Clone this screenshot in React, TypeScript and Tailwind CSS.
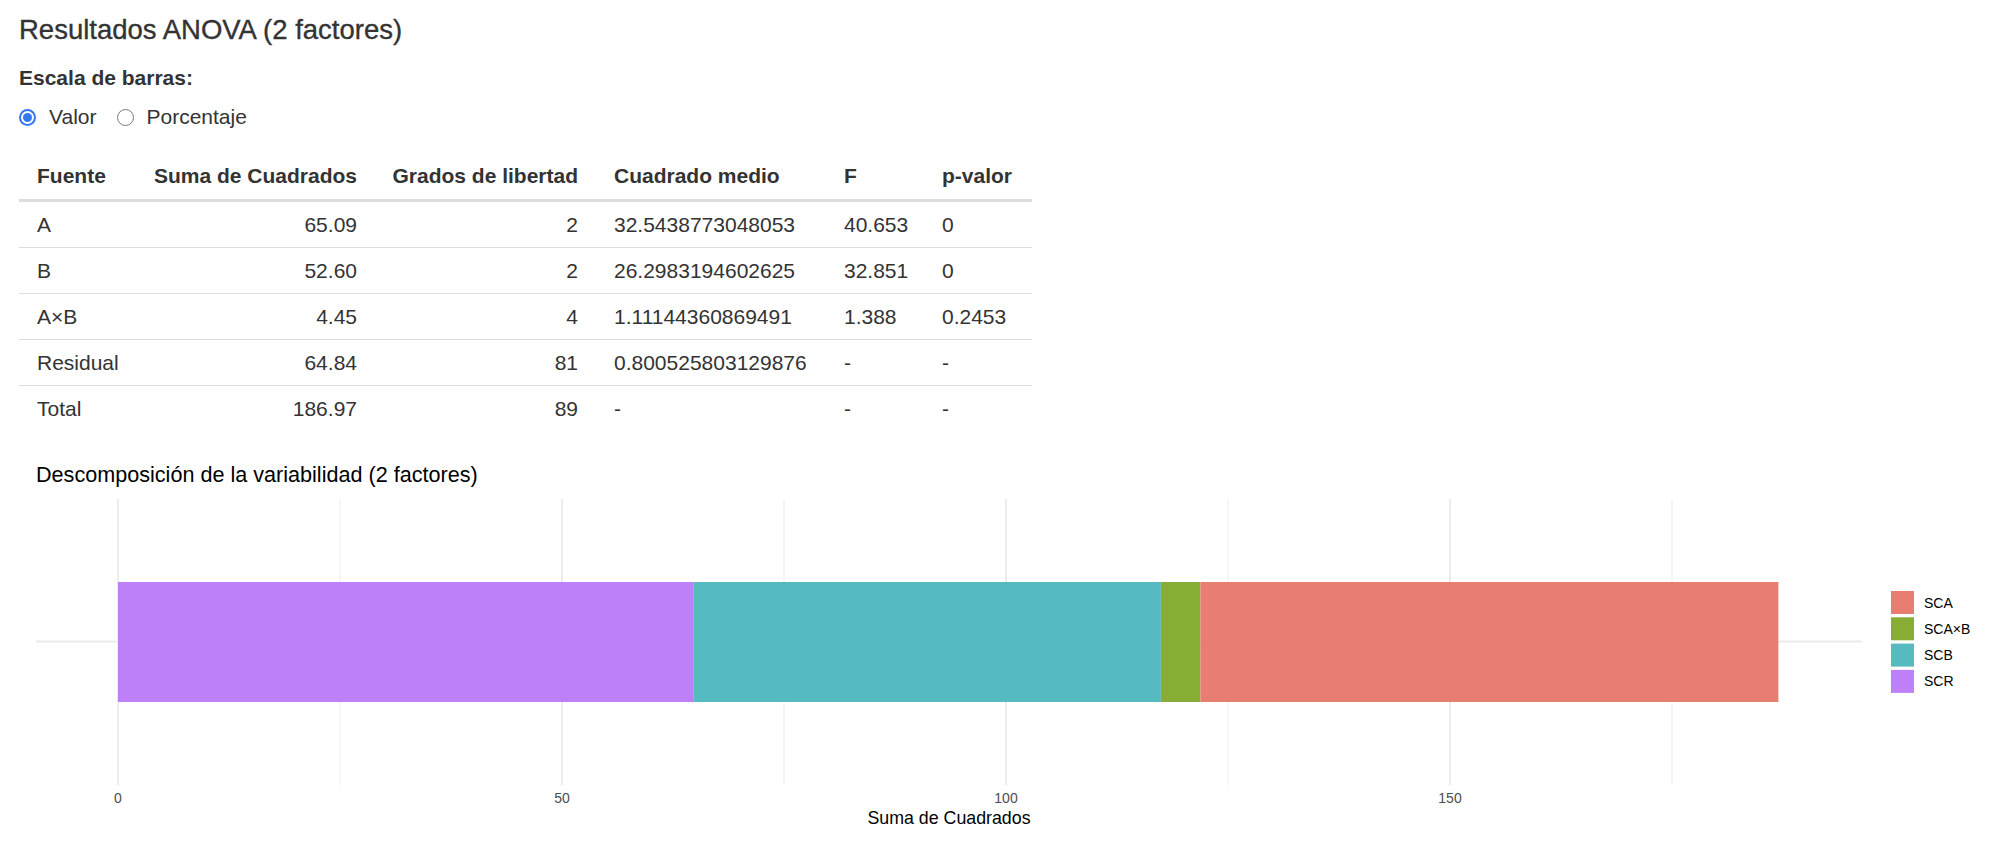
import React from "react";

const cols = [
  { key: "fuente", label: "Fuente", w: "w-[117px]", align: "text-left" },
  { key: "ss", label: "Suma de Cuadrados", w: "w-[239px]", align: "text-right" },
  { key: "df", label: "Grados de libertad", w: "w-[221px]", align: "text-right" },
  { key: "ms", label: "Cuadrado medio", w: "w-[230px]", align: "text-left" },
  { key: "f", label: "F", w: "w-[98px]", align: "text-left" },
  { key: "p", label: "p-valor", w: "w-[108px]", align: "text-left" },
];

const rows: string[][] = [
  ["A", "65.09", "2", "32.5438773048053", "40.653", "0"],
  ["B", "52.60", "2", "26.2983194602625", "32.851", "0"],
  ["A×B", "4.45", "4", "1.11144360869491", "1.388", "0.2453"],
  ["Residual", "64.84", "81", "0.800525803129876", "-", "-"],
  ["Total", "186.97", "89", "-", "-", "-"],
];

const X0 = 118;
const PX = 8.88;
const xs = (v: number) => X0 + v * PX;

const segments = [
  { name: "SCR", v: 64.84, color: "#BD80F8" },
  { name: "SCB", v: 52.6, color: "#56BBC1" },
  { name: "SCA×B", v: 4.45, color: "#87AD35" },
  { name: "SCA", v: 65.09, color: "#E87E71" },
];

const legend = [
  { name: "SCA", color: "#E87E71" },
  { name: "SCA×B", color: "#87AD35" },
  { name: "SCB", color: "#56BBC1" },
  { name: "SCR", color: "#BD80F8" },
];

function Chart() {
  let acc = 0;
  const segs = segments.map((s) => {
    const x1 = xs(acc);
    acc += s.v;
    const x2 = xs(acc);
    return { ...s, x1, x2 };
  });
  const major = [0, 50, 100, 150];
  const minor = [25, 75, 125, 175];
  return (
    <svg
      className="block mt-[9px]"
      width={1972}
      height={406}
      viewBox="19 440 1972 406"
      fontFamily="'Liberation Sans', Arial, sans-serif"
    >
      <text x={36} y={482} fontSize={21.6} fill="#000">
        Descomposición de la variabilidad (2 factores)
      </text>
      {minor.map((v) => (
        <line key={"mi" + v} x1={xs(v)} x2={xs(v)} y1={499} y2={785} stroke="#ebebeb" strokeWidth={0.9} />
      ))}
      {major.map((v) => (
        <line key={"ma" + v} x1={xs(v)} x2={xs(v)} y1={499} y2={785} stroke="#ebebeb" strokeWidth={1.8} />
      ))}
      <line x1={36} x2={1862} y1={641.5} y2={641.5} stroke="#ebebeb" strokeWidth={1.8} />
      {segs.map((s) => (
        <rect key={s.name} x={s.x1} y={582} width={s.x2 - s.x1} height={120} fill={s.color} />
      ))}
      {major.map((v) => (
        <text
          key={"t" + v}
          x={xs(v)}
          y={798}
          fontSize={14}
          fill="#4d4d4d"
          textAnchor="middle"
          dominantBaseline="central"
        >
          {v}
        </text>
      ))}
      <text x={949} y={824} fontSize={17.8} fill="#000" textAnchor="middle">
        Suma de Cuadrados
      </text>
      {legend.map((l, i) => (
        <g key={l.name}>
          <rect x={1891} y={591 + i * 26.3} width={23} height={23} fill={l.color} />
          <text
            x={1924}
            y={591 + i * 26.3 + 11.5}
            fontSize={14}
            fill="#000"
            dominantBaseline="central"
          >
            {l.name}
          </text>
        </g>
      ))}
    </svg>
  );
}

export default function App() {
  return (
    <div className="bg-white w-[2010px] h-[846px] overflow-hidden font-['Liberation_Sans',Arial,sans-serif] text-[#333]">
      <div className="px-[19px]">
        <h3 className="text-[27.5px] leading-[30px] pt-[15px] font-normal [-webkit-text-stroke:0.35px_#333]">
          Resultados ANOVA (2 factores)
        </h3>
        <div className="mt-[18px] text-[21px] leading-[30px] font-bold">Escala de barras:</div>
        <div className="mt-[9px] flex items-center h-[30px] text-[21px] leading-[30px]">
          <div className="flex items-center">
            <span className="w-[17px] h-[17px] rounded-full bg-[#3478f6] flex items-center justify-center">
              <span className="w-[13px] h-[13px] rounded-full bg-white flex items-center justify-center">
                <span className="w-[9px] h-[9px] rounded-full bg-[#3478f6]" />
              </span>
            </span>
            <span className="ml-[13px]">Valor</span>
          </div>
          <div className="flex items-center ml-[21px]">
            <span className="w-[17px] h-[17px] rounded-full border-[1.5px] border-[#7a7a7a] bg-white" />
            <span className="ml-[12px]">Porcentaje</span>
          </div>
        </div>
        <div className="mt-[21px] w-[1013px] text-[21px] whitespace-nowrap">
          <div className="flex h-[49px] border-b-[3px] border-[#dddddd] font-bold">
            {cols.map((c) => (
              <div
                key={c.key}
                className={`${c.w} shrink-0 px-[18px] flex items-center ${c.align === "text-right" ? "justify-end" : "justify-start"}`}
              >
                {c.label}
              </div>
            ))}
          </div>
          {rows.map((r, ri) => (
            <div
              key={ri}
              className={`flex ${ri < rows.length - 1 ? "h-[46px] border-b border-[#dddddd]" : "h-[45px]"}`}
            >
              {r.map((cell, ci) => (
                <div
                  key={ci}
                  className={`${cols[ci].w} shrink-0 px-[18px] flex items-center ${cols[ci].align === "text-right" ? "justify-end" : "justify-start"}`}
                >
                  {cell}
                </div>
              ))}
            </div>
          ))}
        </div>
      </div>
      <div className="px-[19px]">
        <Chart />
      </div>
    </div>
  );
}
